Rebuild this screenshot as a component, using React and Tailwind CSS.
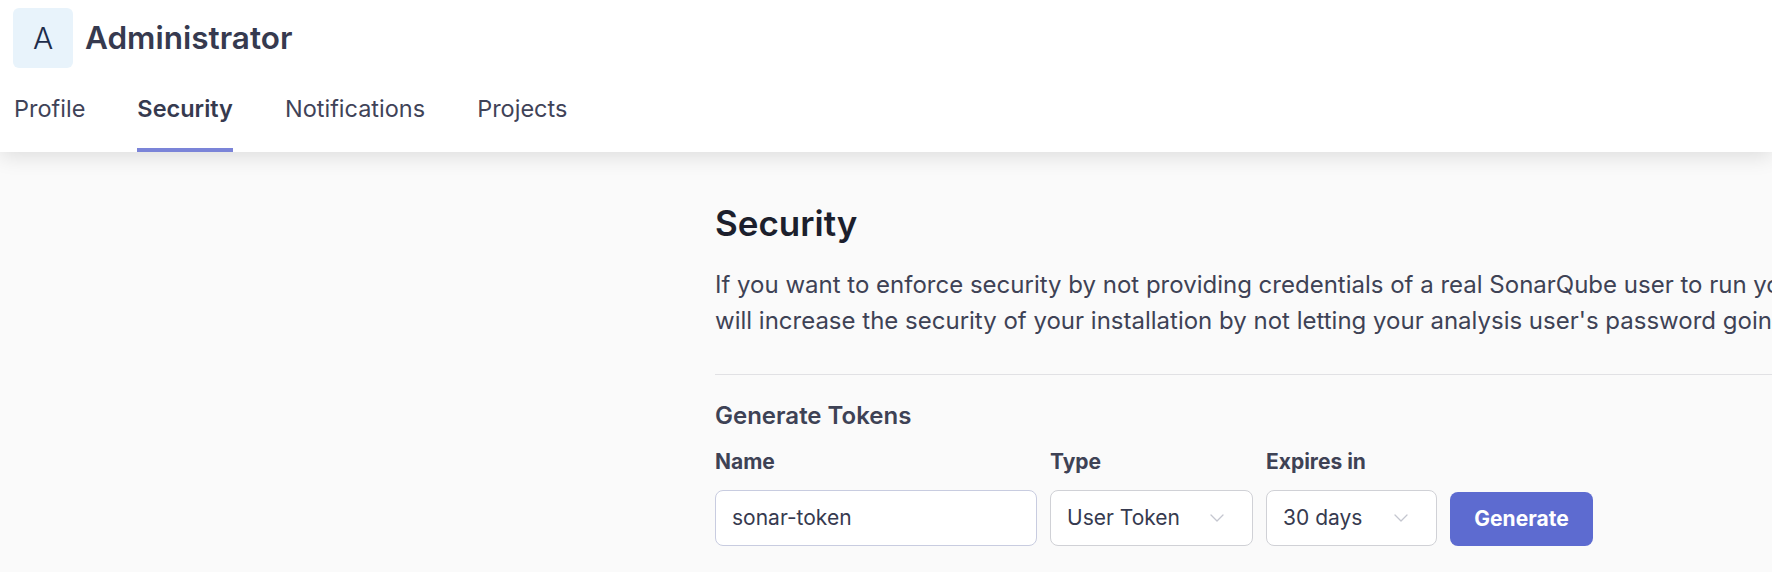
import React from "react";

function Tab({ label, active }) {
  return (
    <div
      className={
        "pt-[24px] pb-[23px] border-b-4 text-[23.5px] leading-[33px] " +
        (active
          ? "border-[#7b84d8] font-semibold text-[#363a4f]"
          : "border-transparent font-normal text-[#3f4358]")
      }
    >
      {label}
    </div>
  );
}

function Chevron() {
  return (
    <svg width="14" height="8" viewBox="0 0 14 8" fill="none" className="shrink-0">
      <path d="M1 1l6 6 6-6" stroke="#c4c6cf" strokeWidth="1.3" strokeLinecap="round" strokeLinejoin="round" />
    </svg>
  );
}

export default function App() {
  return (
    <div className="h-screen w-full overflow-hidden bg-[#fafafa] font-['Inter',sans-serif]">
      <header className="relative z-10 bg-white px-[13px] pt-[8px] shadow-[0_4px_20px_rgba(0,0,0,0.12)]">
        <div className="flex items-center gap-[12px]">
          <div className="flex h-[60px] w-[60px] items-center justify-center rounded-[6px] bg-[#e8f3fb] text-[30px] font-light text-[#1d2c4a]">
            A
          </div>
          <h1 className="text-[31.5px] font-semibold leading-[40px] text-[#363a4f]">Administrator</h1>
        </div>
        <nav className="flex gap-[52px] pl-[1px]">
          <Tab label="Profile" />
          <Tab label="Security" active />
          <Tab label="Notifications" />
          <Tab label="Projects" />
        </nav>
      </header>

      <main className="grid grid-cols-[715px_1fr]">
        <aside />
        <section className="min-w-0 pt-[51px]">
          <h2 className="text-[35px] font-semibold leading-[40px] text-[#1c1f2d]">Security</h2>
          <p className="mt-[24px] whitespace-nowrap text-[24px] leading-[36px] text-[#3e4255]">
            If you want to enforce security by not providing credentials of a real SonarQube user to run your code scan, you may provide a User Token as a replacement of the user login. This
            <br />
            will increase the security of your installation by not letting your analysis user's password going through your network.
          </p>
          <div className="mt-[35px] border-t border-[#e1e1e4]" />
          <h3 className="mt-[24px] text-[24px] font-semibold leading-[33px] text-[#3e4255]">Generate Tokens</h3>
          <div className="mt-[16px] flex items-end gap-[13px]">
            <div className="flex w-[322px] flex-col gap-[14px]">
              <label className="text-[21px] font-bold leading-[28px] text-[#3e4255]">Name</label>
              <div className="flex h-[56px] items-center rounded-[8px] border border-[#c8cce0] bg-white px-[16px] text-[21px] text-[#363a4f]">
                sonar-token
              </div>
            </div>
            <div className="flex w-[203px] flex-col gap-[14px]">
              <label className="text-[21px] font-bold leading-[28px] text-[#3e4255]">Type</label>
              <div className="flex h-[56px] items-center justify-between rounded-[8px] border border-[#d0d1d6] bg-white pl-[16px] pr-[28px] text-[21px] text-[#363a4f]">
                <span>User Token</span>
                <Chevron />
              </div>
            </div>
            <div className="flex w-[171px] flex-col gap-[14px]">
              <label className="text-[21px] font-bold leading-[28px] text-[#3e4255]">Expires in</label>
              <div className="flex h-[56px] items-center justify-between rounded-[8px] border border-[#d0d1d6] bg-white pl-[16px] pr-[28px] text-[21px] text-[#363a4f]">
                <span>30 days</span>
                <Chevron />
              </div>
            </div>
            <button className="h-[54px] w-[143px] rounded-[8px] bg-[#5d6bd0] text-[21px] font-bold text-white">
              Generate
            </button>
          </div>
        </section>
      </main>
    </div>
  );
}
